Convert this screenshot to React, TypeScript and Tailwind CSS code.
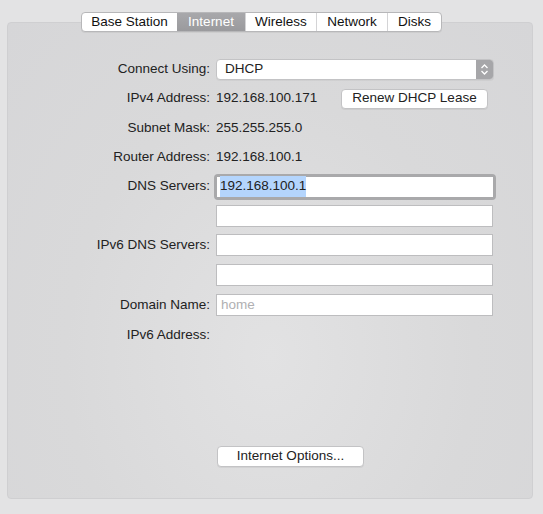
import React from 'react';

const tabs = ['Base Station', 'Internet', 'Wireless', 'Network', 'Disks'];
const tabWidths = ['w-[95px]', 'w-[68px]', 'w-[71px]', 'w-[71px]', 'w-[54px]'];

const Label: React.FC<{ text?: string }> = ({ text }) => (
  <div className="w-[202px] text-right shrink-0">{text}</div>
);

const Field: React.FC<{ children?: React.ReactNode; focused?: boolean }> = ({ children, focused }) => (
  <div
    className={
      focused
        ? 'ml-[4px] w-[282px] h-[26px] rounded-[4px] bg-[#a9a9ab] p-[3px]'
        : 'ml-[6px] w-[277px] h-[22px] border border-[#bdbdbf] bg-white'
    }
  >
    <div className={focused ? 'h-full bg-white flex items-center pl-[3px]' : 'h-full flex items-center pl-[4px]'}>
      {children}
    </div>
  </div>
);

const Row: React.FC<{ label?: string; h?: string; children?: React.ReactNode }> = ({ label, h = 'h-[30px]', children }) => (
  <div className={`${h} flex items-center`}>
    <Label text={label} />
    {children}
  </div>
);

const App: React.FC = () => {
  return (
    <div
      className="w-[543px] h-[514px] bg-[#e3e3e4] text-[13.5px] text-[#222] overflow-hidden"
      style={{ fontFamily: '"Liberation Sans", Arial, sans-serif' }}
    >
      {/* segmented tabs */}
      <div className="pt-[12px] ml-[81px] relative z-10 -mb-[10px] flex">
        <div className="flex h-[20px] rounded-[4px] border border-[#b7b7b9] bg-white shadow-[0_1px_0_rgba(0,0,0,0.05)] overflow-hidden">
          {tabs.map((t, i) => (
            <div
              key={t}
              className={
                (i === 1
                  ? 'bg-gradient-to-b from-[#a8a8ab] to-[#9a9a9d] text-white '
                  : 'text-[#111] ') +
                (i > 1 ? 'border-l border-[#d4d4d6] ' : '') +
                tabWidths[i] +
                ' flex items-center justify-center leading-none'
              }
            >
              {t}
            </div>
          ))}
        </div>
      </div>

      {/* panel */}
      <div className="mx-[7px] w-[526px] h-[477px] rounded-[4px] border border-[#cfcfd1] bg-[radial-gradient(ellipse_at_50%_70%,#e2e2e3_0%,#d9d9da_55%,#d6d6d8_100%)] pt-[31px]">
        <Row label="Connect Using:">
          <div className="ml-[6px] w-[278px] h-[21px] rounded-[4px] border border-[#c3c3c5] bg-white flex items-center overflow-hidden shadow-[0_1px_0_rgba(0,0,0,0.04)]">
            <div className="flex-1 pl-[8px]">DHCP</div>
            <div className="w-[17px] h-full bg-[#a6a6a9] flex items-center justify-center">
              <svg width="9" height="13" viewBox="0 0 9 13" fill="none" stroke="white" strokeWidth="1.3">
                <path d="M1.5 5 L4.5 2 L7.5 5" />
                <path d="M1.5 8 L4.5 11 L7.5 8" />
              </svg>
            </div>
          </div>
        </Row>
        <Row label="IPv4 Address:" h="h-[29px]">
          <div className="ml-[6px] w-[125px]">192.168.100.171</div>
          <div className="h-[20px] w-[147px] rounded-[4px] border border-[#c3c3c5] bg-white flex items-center justify-center shadow-[0_1px_0_rgba(0,0,0,0.05)]">
            Renew DHCP Lease
          </div>
        </Row>
        <Row label="Subnet Mask:">
          <div className="ml-[6px]">255.255.255.0</div>
        </Row>
        <Row label="Router Address:" h="h-[29px]">
          <div className="ml-[6px]">192.168.100.1</div>
        </Row>
        <Row label="DNS Servers:" h="h-[29px]">
          <Field focused>
            <span className="bg-[#b4d5fd]">192.168.100.1</span>
          </Field>
        </Row>
        <Row h="h-[29px]">
          <Field />
        </Row>
        <Row label="IPv6 DNS Servers:">
          <Field />
        </Row>
        <Row>
          <Field />
        </Row>
        <Row label="Domain Name:">
          <Field>
            <span className="text-[#b0b0b2]">home</span>
          </Field>
        </Row>
        <Row label="IPv6 Address:" />

        <div className="mt-[96px] ml-[209px] w-[147px] h-[21px] rounded-[4px] border border-[#c3c3c5] bg-white flex items-center justify-center shadow-[0_1px_0_rgba(0,0,0,0.05)]">
          Internet Options...
        </div>
      </div>
    </div>
  );
};

export default App;
